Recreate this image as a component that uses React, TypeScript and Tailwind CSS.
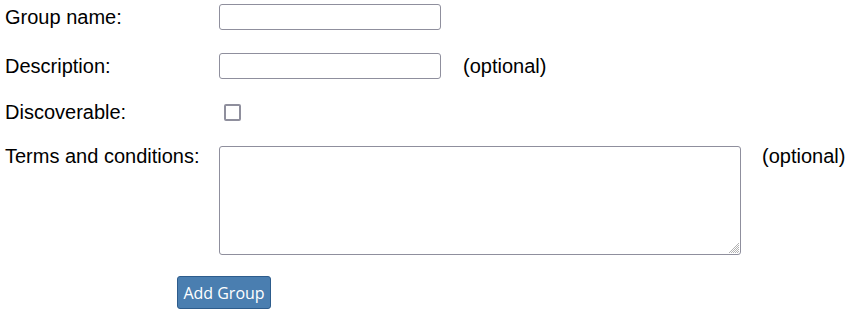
import React from "react";

function ResizeGrip() {
  return (
    <svg
      className="pointer-events-none absolute bottom-[2px] right-[2px]"
      width="11"
      height="11"
      viewBox="0 0 11 11"
    >
      <path
        d="M11 1 L1 11 M11 3 L3 11 M11 5 L5 11 M11 7 L7 11 M11 9 L9 11"
        stroke="#a0a0a0"
        strokeWidth="0.8"
        fill="none"
      />
    </svg>
  );
}

export default function App() {
  return (
    <div className="w-[854px] h-[320px] bg-white text-black font-['Liberation_Sans',Arial,sans-serif] text-[20px] leading-[23px] pt-[4px]">
      <div className="flex items-center h-[26px]">
        <label className="w-[219px] pl-[5px]">Group name:</label>
        <input
          type="text"
          className="w-[222px] h-[26px] border border-[#8f8f9d] rounded-[3px] bg-white outline-none"
        />
      </div>
      <div className="flex items-center h-[26px] mt-[23px]">
        <label className="w-[219px] pl-[5px]">Description:</label>
        <input
          type="text"
          className="w-[222px] h-[26px] border border-[#8f8f9d] rounded-[3px] bg-white outline-none"
        />
        <span className="ml-[22px]">(optional)</span>
      </div>
      <div className="flex items-center h-[24px] mt-[21px]">
        <label className="w-[219px] pl-[5px]">Discoverable:</label>
        <input
          type="checkbox"
          className="appearance-none ml-[5px] w-[17px] h-[17px] border-2 border-[#8f8f9d] rounded-[2px] bg-white"
        />
      </div>
      <div className="flex items-start mt-[22px]">
        <label className="w-[219px] pl-[5px] -mt-[1px]">Terms and conditions:</label>
        <div className="relative">
          <textarea className="block w-[522px] h-[109px] border border-[#8f8f9d] rounded-[3px] bg-white outline-none resize-none" />
          <ResizeGrip />
        </div>
        <span className="ml-[21px] -mt-[1px]">(optional)</span>
      </div>
      <div className="pl-[177px] mt-[21px]">
        <button className="w-[94px] h-[33px] bg-[#4a7eb0] border border-[#2d5c8c] rounded-[3px] text-white font-['Open_Sans',sans-serif] text-[16px] leading-[20px]">
          Add Group
        </button>
      </div>
    </div>
  );
}
